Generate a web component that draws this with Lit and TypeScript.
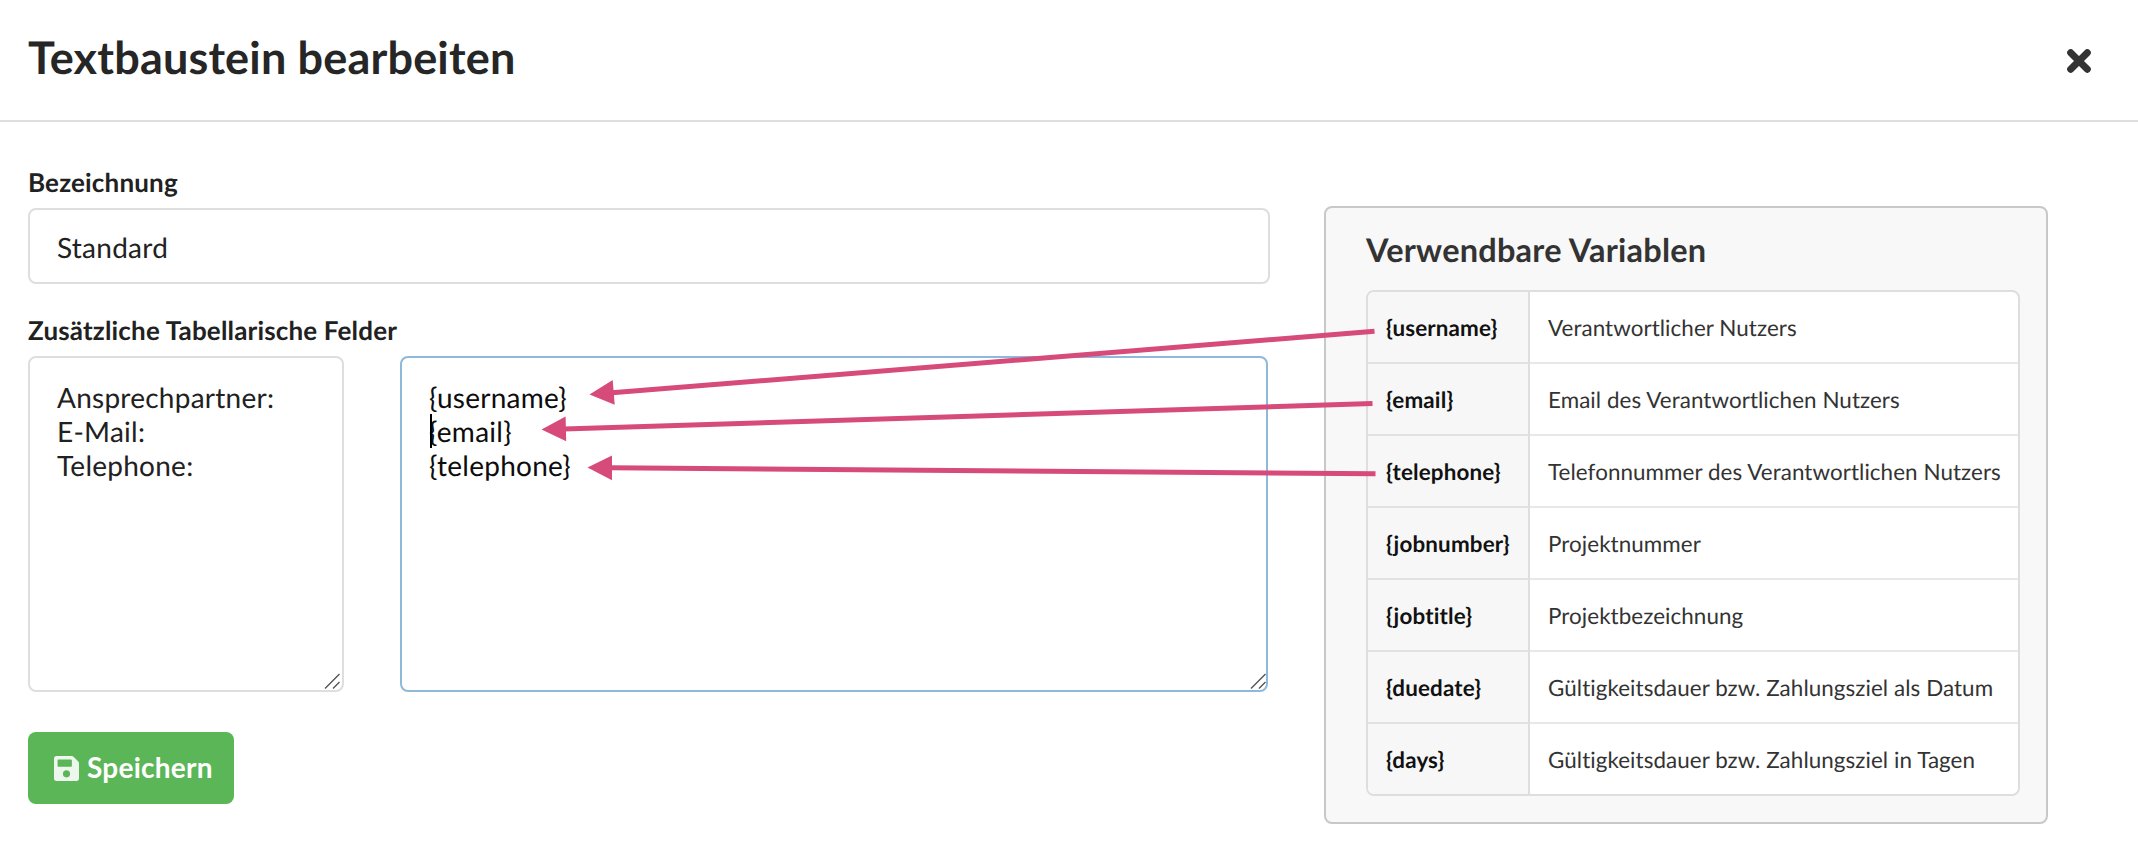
import { LitElement, html, css } from "lit";
import { customElement } from "lit/decorators.js";

const VARIABLES: [string, string][] = [
  ["{username}", "Verantwortlicher Nutzers"],
  ["{email}", "Email des Verantwortlichen Nutzers"],
  ["{telephone}", "Telefonnummer des Verantwortlichen Nutzers"],
  ["{jobnumber}", "Projektnummer"],
  ["{jobtitle}", "Projektbezeichnung"],
  ["{duedate}", "Gültigkeitsdauer bzw. Zahlungsziel als Datum"],
  ["{days}", "Gültigkeitsdauer bzw. Zahlungsziel in Tagen"],
];

@customElement("app-root")
export class AppRoot extends LitElement {
  static styles = css`
    :host {
      display: block;
      position: relative;
      height: 852px;
      overflow: hidden;
      background: #fff;
      color: #212121;
      font-family: Lato, sans-serif;
      font-size: 28px;
      font-variant-ligatures: none;
      text-rendering: geometricPrecision;
    }
    * { box-sizing: border-box; }
    .header {
      display: flex;
      justify-content: space-between;
      align-items: center;
      height: 122px;
      padding: 0 47px 5px 28px;
      border-bottom: 2px solid #dedede;
    }
    .title { margin: -2px 0 0; font-size: 45px; line-height: 60px; font-weight: 700; letter-spacing: 0.17px; color: #262626; white-space: nowrap; }
    .close { width: 24px; height: 24px; margin-top: 7px; display: block; }
    .body { display: flex; align-items: flex-start; gap: 54px; padding: 43px 0 0 28px; }
    .form { width: 1242px; display: flex; flex-direction: column; align-items: flex-start; }
    .label { height: 34px; line-height: 34px; margin-bottom: 9px; font-size: 26px; font-weight: 700; letter-spacing: 0.17px; white-space: nowrap; }
    .input { width: 100%; height: 76px; padding: 0 27px; line-height: 74px; letter-spacing: 0.25px; border: 2px solid #dedede; border-radius: 8px; margin-bottom: 29px; }
    .areas { display: flex; gap: 56px; }
    .area {
      position: relative;
      height: 336px;
      padding: 22px 27px;
      line-height: 34px;
      letter-spacing: 0.25px;
      white-space: pre;
      border: 2px solid #dedede;
      border-radius: 8px;
    }
    .names { width: 316px; }
    .values { width: 868px; color: #0d0d0d; border-color: #8fb9d9; }
    .grip { position: absolute; right: 2px; bottom: 1px; width: 16px; height: 16px; }
    .values .grip { right: 0; }
    .caret { position: absolute; left: 28px; top: 56px; width: 2px; height: 34px; background: #000; }
    .save {
      display: flex;
      align-items: center;
      height: 72px;
      width: 206px;
      margin-top: 40px;
      padding: 0 0 0 26px;
      gap: 8px;
      border: 0;
      border-radius: 8px;
      background: #5ab656;
      color: #fff;
      font: 700 28px Lato, sans-serif;
      letter-spacing: 0.25px;
    }
    .save span { margin-top: -2px; }
    .disk { width: 25px; height: 25px; flex: none; opacity: 0.9; }
    .panel { width: 724px; height: 618px; margin-top: 41px; padding: 22px 26px 26px 40px; border: 2px solid #c8c8c8; border-radius: 8px; background: #f8f8f8; }
    .subtitle { margin: 0 0 20px; height: 40px; line-height: 40px; font-size: 32.500px; letter-spacing: 0.22px; font-weight: 700; color: #333; }
    .table { border: 2px solid #dedede; border-radius: 8px; overflow: hidden; height: 506px; background: #fff; font-size: 22.400px; }
    .row { display: grid; grid-template-columns: 162px 1fr; height: 72px; line-height: 68px; white-space: nowrap; }
    .key { padding: 2px 0 0 18px; font-weight: 700; letter-spacing: 0.15px; color: #111; background: #f7f7f7; border-right: 2px solid #dedede; border-bottom: 2px solid #e1e1e1; }
    .text { padding: 2px 0 0 18px; letter-spacing: 0.07px; color: #333; border-bottom: 2px solid #e8e8e8; }
    .row:last-child .key, .row:last-child .text { border-bottom: 0; }
    .arrows { position: absolute; left: 0; top: 0; width: 2138px; height: 852px; pointer-events: none; }
  `;

  private grip() {
    return html`<svg class="grip" viewBox="0 0 16 16" fill="none" stroke="#555" stroke-width="1.4">
      <path d="M1 15.5 15.5 1M9 15.5 15.5 9" />
    </svg>`;
  }

  render() {
    return html`
      <div class="header">
        <h1 class="title">Textbaustein bearbeiten</h1>
        <svg class="close" viewBox="0 0 24 24" stroke="#333" stroke-width="7" stroke-linecap="round">
          <path d="M3.7 3.7 20.3 20.3M20.3 3.7 3.7 20.3" />
        </svg>
      </div>
      <div class="body">
        <div class="form">
          <div class="label">Bezeichnung</div>
          <div class="input">Standard</div>
          <div class="label">Zusätzliche Tabellarische Felder</div>
          <div class="areas">
            <div class="area names">${"Ansprechpartner:\nE-Mail:\nTelephone:"}${this.grip()}</div>
            <div class="area values">${"{username}\n{email}\n{telephone}"}<span class="caret"></span>${this.grip()}</div>
          </div>
          <button class="save">
            <svg class="disk" viewBox="0 0 448 448">
              <path fill="#fff" fill-rule="evenodd" d="M434 98 350 14A48 48 0 0 0 316 0H48A48 48 0 0 0 0 48V400A48 48 0 0 0 48 448H400A48 48 0 0 0 448 400V132A48 48 0 0 0 434 98ZM224 384A64 64 0 1 1 224 256 64 64 0 0 1 224 384ZM320 79V180A12 12 0 0 1 308 192H76A12 12 0 0 1 64 180V76A12 12 0 0 1 76 64H305A12 12 0 0 1 313 68L316 71A12 12 0 0 1 320 79Z" />
            </svg>
            <span>Speichern</span>
          </button>
        </div>
        <div class="panel">
          <h2 class="subtitle">Verwendbare Variablen</h2>
          <div class="table">
            ${VARIABLES.map(([k, t]) => html`<div class="row"><div class="key">${k}</div><div class="text">${t}</div></div>`)}
          </div>
        </div>
      </div>
      <svg class="arrows" viewBox="0 0 2138 852" stroke="#d64b7a" fill="#d64b7a">
        <g stroke-width="5">
          <path d="M612 392.800 1374.500 331.300" />
          <path d="M564 429 1372.500 403.500" />
          <path d="M610 467.800 1375.500 473.700" />
        </g>
        <g stroke="none">
          <path d="M589.500 394.500 612.700 380 614.700 404.700Z" />
          <path d="M541.500 429.500 565.600 416.600 566.200 441.200Z" />
          <path d="M587.500 467.600 612 455.500 612 480.300Z" />
        </g>
      </svg>
    `;
  }
}
